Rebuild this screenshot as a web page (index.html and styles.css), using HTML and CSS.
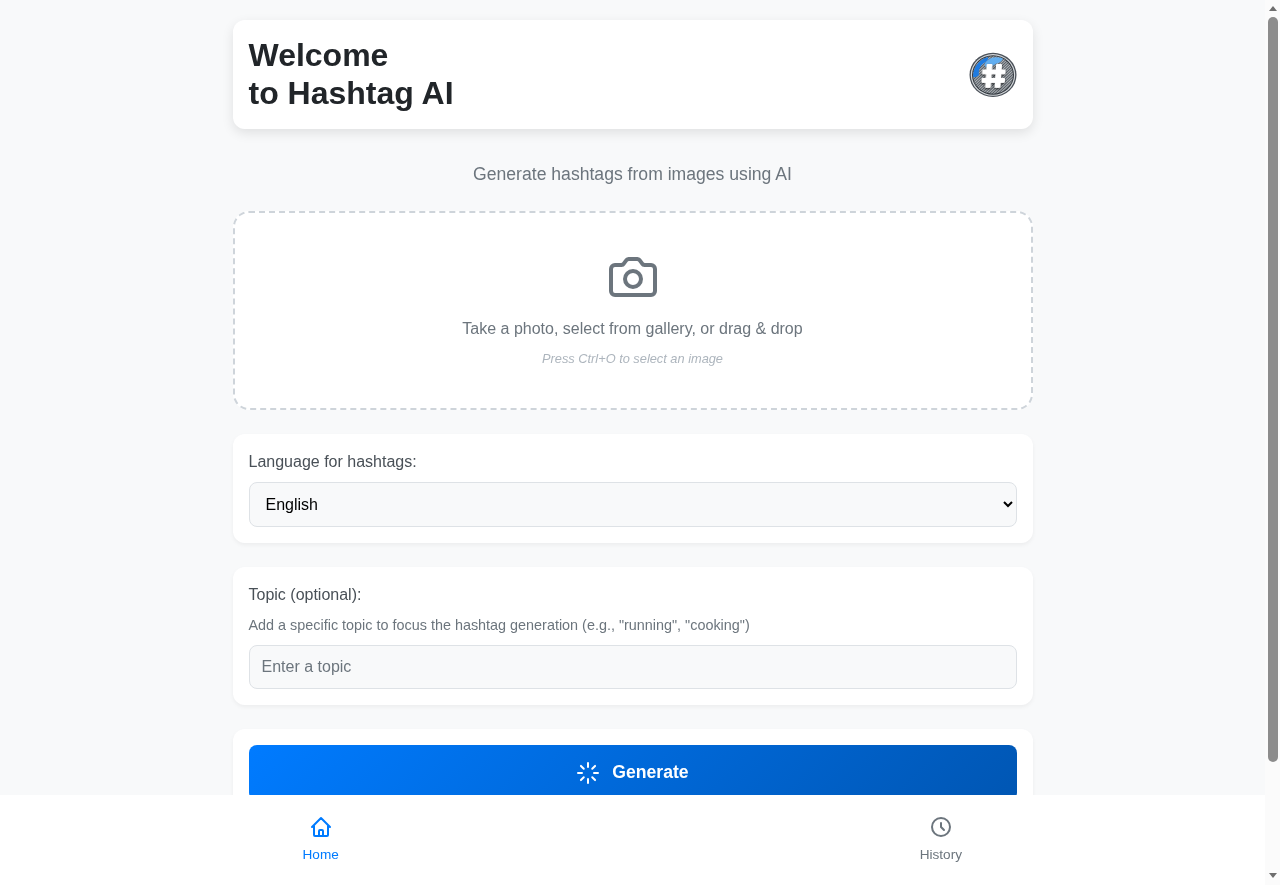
FILE: index.html
```html
<!DOCTYPE html>
<html lang="en">
<head>
    <meta charset="UTF-8">
    <meta name="viewport" content="width=device-width, initial-scale=1.0">
    <title>Hashtag AI</title>
    <link rel="stylesheet" href="styles.css">
</head>
<body>
    <div class="container">
        <header class="header-card">
            <h1>Welcome<br>to Hashtag AI</h1>
            <svg class="logo" viewBox="0 0 48 48" aria-hidden="true">
                <defs>
                    <pattern id="hatch" width="2" height="2" patternUnits="userSpaceOnUse" patternTransform="rotate(45)">
                        <rect width="2" height="2" fill="#555c63"/>
                        <rect width="1" height="2" fill="#b0b4b8"/>
                    </pattern>
                </defs>
                <g transform="translate(0 1.4) scale(1 .94)">
                    <circle cx="24" cy="24" r="23.5" fill="#4a5058"/>
                    <circle cx="24" cy="24" r="22.2" fill="#d5d9dc"/>
                    <circle cx="24" cy="24" r="21" fill="#30363d"/>
                    <circle cx="24" cy="24" r="20" fill="url(#hatch)"/>
                    <path class="logo-sea" d="M4 26 C4 15 11 7 19 5 C20 8 17 10 14 12 C11 15 9 19 10 24 C8 26 6 27 4 26z"/>
                    <path class="logo-land" d="M17 10 C20 6 26 4 33 6 C35 8 31 11 27 12 C24 14 21 17 17 16 C15 14 15 12 17 10z"/>
                </g>
                <g class="logo-hash" transform="skewX(-4) translate(2 0)">
                    <rect x="16.500" y="13" width="6" height="24" rx="1"/>
                    <rect x="26" y="13" width="6" height="24" rx="1"/>
                    <rect x="12.500" y="18.500" width="23.500" height="5" rx="1"/>
                    <rect x="12.500" y="27" width="23.500" height="5" rx="1"/>
                </g>
            </svg>
        </header>

        <p class="tagline">Generate hashtags from images using AI</p>

        <div class="upload-box">
            <svg class="camera-icon" viewBox="0 0 24 24" aria-hidden="true">
                <path d="M23 19a2 2 0 0 1-2 2H3a2 2 0 0 1-2-2V8a2 2 0 0 1 2-2h3.200a1.500 1.500 0 0 0 1.200-.7l1.200-1.600A1.500 1.500 0 0 1 9.800 3h4.400a1.500 1.500 0 0 1 1.200.7l1.200 1.600a1.500 1.500 0 0 0 1.200.7H21a2 2 0 0 1 2 2z"/>
                <circle cx="12" cy="13" r="4"/>
            </svg>
            <p class="upload-text">Take a photo, select from gallery, or drag &amp; drop</p>
            <p class="upload-hint">Press Ctrl+O to select an image</p>
        </div>

        <section class="card">
            <label class="field-label" for="language">Language for hashtags:</label>
            <select class="language-select" id="language">
                <option>English</option>
                <option>Spanish</option>
                <option>French</option>
            </select>
        </section>

        <section class="card">
            <label class="field-label" for="topic">Topic (optional):</label>
            <p class="field-help">Add a specific topic to focus the hashtag generation (e.g., "running", "cooking")</p>
            <input class="topic-input" id="topic" type="text" placeholder="Enter a topic">
        </section>

        <section class="card">
            <button class="generate-button" type="button">
                <svg class="generate-icon" viewBox="0 0 24 24" aria-hidden="true">
                    <path d="M12 2v4M12 18v4M4.930 4.930l2.830 2.830M16.240 16.240l2.830 2.830M2 12h4M18 12h4M4.930 19.070l2.830-2.830M16.240 7.760l2.830-2.830"/>
                </svg>
                Generate
            </button>
        </section>
    </div>

    <nav class="bottom-nav">
        <a class="nav-item active" href="#">
            <svg class="nav-icon" viewBox="0 0 24 24" aria-hidden="true">
                <path d="M3 12l2-2m0 0l7-7 7 7M5 10v10a1 1 0 0 0 1 1h3m10-11l2 2m-2-2v10a1 1 0 0 1-1 1h-3m-6 0a1 1 0 0 0 1-1v-4a1 1 0 0 1 1-1h2a1 1 0 0 1 1 1v4a1 1 0 0 0 1 1m-6 0h6"/>
            </svg>
            Home
        </a>
        <a class="nav-item" href="#">
            <svg class="nav-icon" viewBox="0 0 24 24" aria-hidden="true">
                <circle cx="12" cy="12" r="9"/>
                <path d="M12 8v4l3 3"/>
            </svg>
            History
        </a>
    </nav>

    <div class="scrollbar" aria-hidden="true">
        <span class="scroll-arrow-up"></span>
        <span class="scroll-thumb"></span>
        <span class="scroll-arrow-down"></span>
    </div>
</body>
</html>
```
FILE: styles.css
```css
* {
    box-sizing: border-box;
}
body {
    font-family: "Liberation Sans", Arial, sans-serif;
    margin: 0;
    padding-right: 15px;
    background-color: #f8f9fa;
    color: #212529;
}
.container {
    width: 801px;
    margin: 0 auto;
    padding: 20px 0.5px 145px;
    will-change: transform;
}
.header-card {
    display: flex;
    justify-content: space-between;
    align-items: center;
    background-color: #fff;
    border-radius: 12px;
    padding: 16px;
    box-shadow: 0 4px 12px rgba(0, 0, 0, 0.1);
}
.header-card h1 {
    font-size: 32px;
    line-height: 38.4px;
    margin: 0;
}
.logo {
    width: 48px;
    height: 48px;
    margin-top: 2px;
}
.logo-sea {
    fill: #1f7be0;
}
.logo-land {
    fill: #62aef0;
}
.logo-hash {
    fill: #fff;
    filter: drop-shadow(0 1px 1px rgba(0, 0, 0, 0.7));
}
.tagline {
    text-align: center;
    font-size: 17.6px;
    line-height: 23px;
    color: #6c757d;
    margin: 34px 0 25px;
}
.upload-box {
    height: 199px;
    background-color: #fff;
    border: 2px dashed #ced4da;
    border-radius: 16px;
    padding-top: 40px;
    text-align: center;
    margin-bottom: 24px;
}
.camera-icon {
    display: block;
    width: 48px;
    height: 48px;
    margin: 0 auto 16px;
    fill: none;
    stroke: #6c757d;
    stroke-width: 2;
    stroke-linecap: round;
    stroke-linejoin: round;
}
.upload-text {
    font-size: 16px;
    line-height: 23px;
    color: #6c757d;
    margin: 0 0 10px;
}
.upload-hint {
    font-size: 12.8px;
    line-height: 18px;
    font-style: italic;
    color: #adb5bd;
    margin: 0;
}
.card {
    background-color: #fff;
    border-radius: 12px;
    padding: 16px;
    margin-bottom: 24px;
    box-shadow: 0 2px 4px rgba(0, 0, 0, 0.05);
}
.field-label {
    display: block;
    font-size: 16px;
    line-height: 23px;
    color: #495057;
    margin-bottom: 9px;
}
.field-help {
    font-size: 14.4px;
    line-height: 20px;
    color: #6c757d;
    margin: 0 0 10px;
}
.language-select {
    display: block;
    width: 100%;
    height: 45px;
    font-family: inherit;
    font-size: 16px;
    color: #000;
    padding: 0 12px;
    background-color: #f8f9fa;
    border: 1px solid #dee2e6;
    border-radius: 8px;
}
.topic-input {
    display: block;
    width: 100%;
    height: 44px;
    font-family: inherit;
    font-size: 16px;
    padding: 0 12px;
    background-color: #f8f9fa;
    border: 1px solid #dee2e6;
    border-radius: 8px;
}
.topic-input::placeholder {
    color: #6c757d;
}
.generate-button {
    display: flex;
    justify-content: center;
    align-items: center;
    gap: 12px;
    width: 100%;
    height: 56px;
    font-family: inherit;
    font-size: 17.6px;
    font-weight: bold;
    color: #fff;
    background: linear-gradient(135deg, #007bff, #0056b3);
    border: none;
    border-radius: 8px;
}
.generate-icon {
    width: 24px;
    height: 24px;
    fill: none;
    stroke: #fff;
    stroke-width: 2;
    stroke-linecap: round;
}
.bottom-nav {
    position: fixed;
    left: 0;
    right: 0;
    bottom: 0;
    height: 90px;
    display: flex;
    justify-content: space-between;
    padding: 20px 318px 0 302.5px;
    background-color: #fff;
    will-change: transform;
}
.nav-item {
    display: flex;
    flex-direction: column;
    align-items: center;
    gap: 8px;
    font-size: 13.6px;
    line-height: 16px;
    color: #6c757d;
    text-decoration: none;
}
.nav-item.active {
    color: #007bff;
}
.nav-icon {
    width: 24px;
    height: 24px;
    fill: none;
    stroke: currentColor;
    stroke-width: 2;
    stroke-linecap: round;
    stroke-linejoin: round;
}
/* the reference shows the browser's classic scrollbar, headless hides the real one */
.scrollbar {
    position: fixed;
    top: 0;
    right: 0;
    bottom: 0;
    width: 15px;
    display: flex;
    flex-direction: column;
    align-items: center;
    background-color: #fbfbfb;
    padding-top: 6px;
}
.scroll-arrow-up {
    border-left: 4.5px solid transparent;
    border-right: 4.5px solid transparent;
    border-bottom: 5px solid #6e6e6e;
}
.scroll-thumb {
    width: 10px;
    height: 745px;
    margin-top: 6px;
    background-color: #8c8c8c;
    border-radius: 5px;
}
.scroll-arrow-down {
    margin-top: 111px;
    border-left: 4.5px solid transparent;
    border-right: 4.5px solid transparent;
    border-top: 5px solid #6e6e6e;
}
```
